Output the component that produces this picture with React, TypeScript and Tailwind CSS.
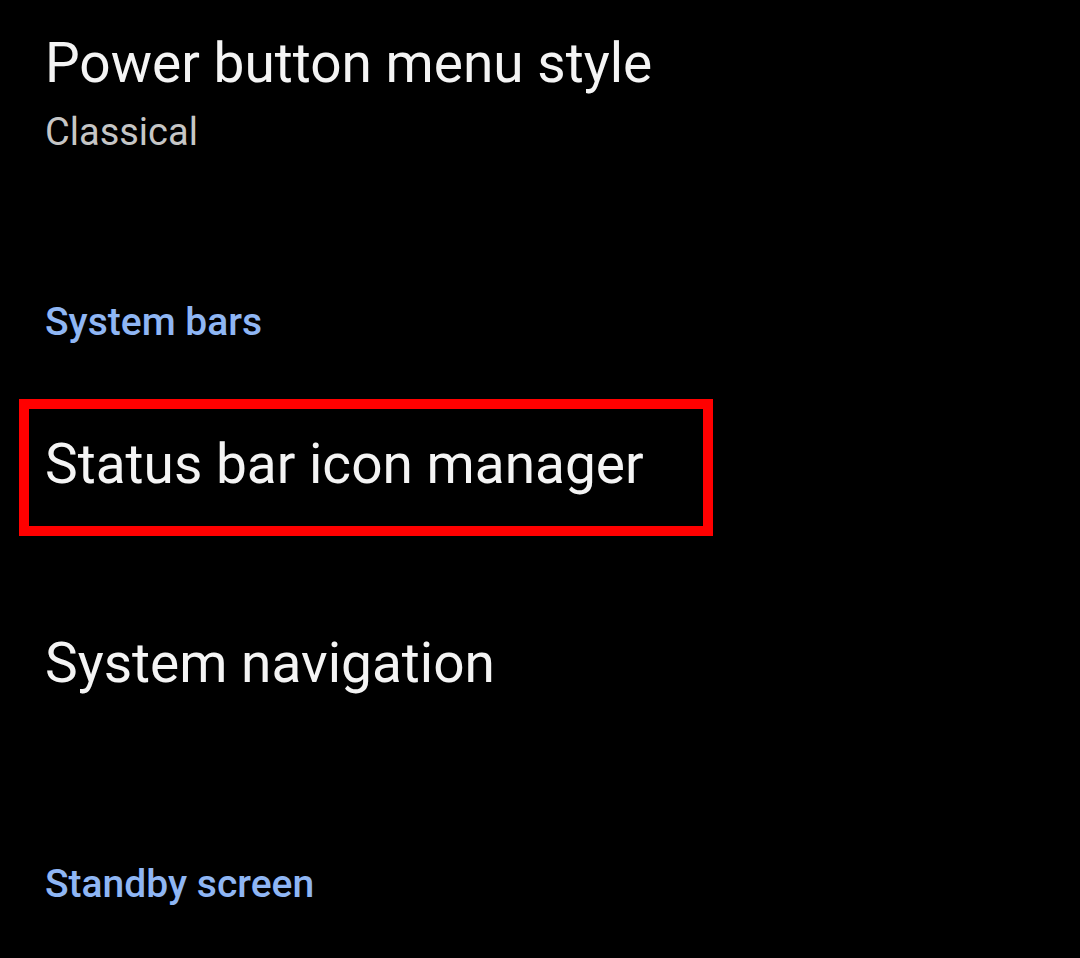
export default function App() {
  return (
    <div className="w-[1080px] h-[958px] bg-black overflow-hidden font-['Roboto',sans-serif]">
      <div className="pl-[45px] pt-[36px]">
        <div className="text-[55px] leading-none text-[#f4f4f4]">Power button menu style</div>
        <div className="text-[38px] leading-none mt-[22px] text-[#c6c6c6]">Classical</div>
      </div>

      <div className="pl-[45px] mt-[152px] text-[39px] leading-none font-medium text-[#8fb6f4]">System bars</div>

      <div className="mt-[57px] ml-[19px] w-[694px] h-[137px] border-[10px] border-[#ff0000] pt-[28px] pl-[16px]">
        <div className="text-[55px] leading-none text-[#f4f4f4]">Status bar icon manager</div>
      </div>

      <div className="pl-[45px] mt-[100px] text-[55px] leading-none text-[#f4f4f4]">System navigation</div>

      <div className="pl-[45px] mt-[174px] text-[39px] leading-none font-medium text-[#8fb6f4]">Standby screen</div>
    </div>
  );
}
